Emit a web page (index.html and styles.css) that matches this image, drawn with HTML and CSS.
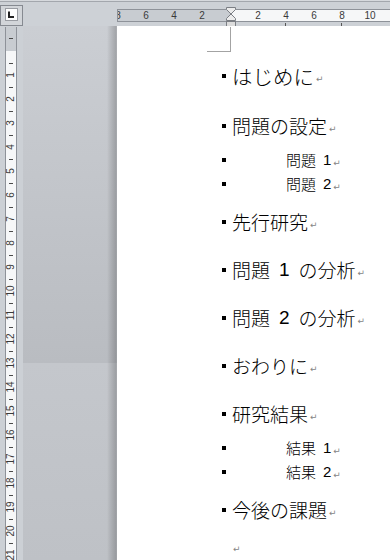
FILE: index.html
```html
<!DOCTYPE html>
<html lang="ja">
<head>
    <meta charset="UTF-8">
    <meta name="viewport" content="width=device-width, initial-scale=1.0">
    <title>文書</title>
    <link rel="stylesheet" href="styles.css">
</head>
<body>
    <div class="topline"></div>
    <div class="app">
        <div class="corner">
            <div class="tab-select">
                <svg width="13" height="13" viewBox="0 0 13 13">
                    <rect x="0.5" y="0.5" width="12" height="12" fill="#fdfdfd" stroke="#9a9da3"/>
                    <path d="M4 3.5 V9 H9" fill="none" stroke="#222" stroke-width="2"/>
                </svg>
            </div>
        </div>

        <div class="hbar">
            <div class="hruler">
                <div class="hr-margin">
                    <span>8</span><span>6</span><span>4</span><span>2</span>
                </div>
                <div class="hr-text">
                    <svg class="indent" width="10" height="21" viewBox="0 0 10 21">
                        <polygon points="0.5,0.5 9.5,0.5 9.5,2.5 5,7 0.5,2.5" fill="#ececec" stroke="#7b7e84"/>
                        <polygon points="5,7 9.5,11.5 9.5,13.5 0.5,13.5 0.5,11.5" fill="#ececec" stroke="#7b7e84"/>
                        <rect x="0.5" y="14.5" width="9" height="6" fill="#dcdcdc" stroke="#7b7e84"/>
                    </svg>
                    <span>2</span><span class="stop">4</span><span>6</span><span class="stop">8</span><span>10</span><span></span>
                </div>
            </div>
        </div>

        <div class="vbar">
            <div class="vruler">
                <div class="vr-margin"><i></i></div>
                <div class="vr-text">
                    <span><em>1</em></span><span><em>2</em></span><span><em>3</em></span>
                    <span><em>4</em></span><span><em>5</em></span><span><em>6</em></span>
                    <span><em>7</em></span><span><em>8</em></span><span><em>9</em></span>
                    <span><em>10</em></span><span><em>11</em></span><span><em>12</em></span>
                    <span><em>13</em></span><span><em>14</em></span><span><em>15</em></span>
                    <span><em>16</em></span><span><em>17</em></span><span><em>18</em></span>
                    <span><em>19</em></span><span><em>20</em></span><span><em>21</em></span>
                </div>
            </div>
        </div>

        <div class="workspace">
            <div class="gutter"></div>
            <div class="page">
                <div class="crop"></div>
                <p class="item title"><b class="bullet"></b>はじめに<span class="pm">↵</span></p>
                <p class="item"><b class="bullet"></b>問題の設定<span class="pm">↵</span></p>
                <p class="sub"><b class="bullet"></b>問題<span class="num">1</span><span class="pm">↵</span></p>
                <p class="sub"><b class="bullet"></b>問題<span class="num">2</span><span class="pm">↵</span></p>
                <p class="item"><b class="bullet"></b>先行研究<span class="pm">↵</span></p>
                <p class="item"><b class="bullet"></b>問題<span class="num">1</span>の分析<span class="pm">↵</span></p>
                <p class="item"><b class="bullet"></b>問題<span class="num">2</span>の分析<span class="pm">↵</span></p>
                <p class="item"><b class="bullet"></b>おわりに<span class="pm">↵</span></p>
                <p class="item"><b class="bullet"></b>研究結果<span class="pm">↵</span></p>
                <p class="sub"><b class="bullet"></b>結果<span class="num">1</span><span class="pm">↵</span></p>
                <p class="sub"><b class="bullet"></b>結果<span class="num">2</span><span class="pm">↵</span></p>
                <p class="item"><b class="bullet"></b>今後の課題<span class="pm">↵</span></p>
                <p class="empty"><span class="pm">↵</span></p>
            </div>
        </div>
    </div>
</body>
</html>
```

FILE: styles.css
```css
html, body {
    margin: 0;
    padding: 0;
    height: 560px;
    overflow: hidden;
}
body {
    font-family: 'Liberation Sans', sans-serif;
    background: #cdd1d6;
}
.topline {
    height: 1px;
    border-bottom: 1px solid #a3a7ad;
    background: #d6d9dd;
}
.app {
    display: grid;
    grid-template-columns: 23px 1fr;
    grid-template-rows: 24px 534px;
}

/* corner tab selector */
.corner {
    padding-top: 3px;
}
.tab-select {
    box-sizing: border-box;
    width: 23px;
    height: 21px;
    border: 1px solid #868a91;
    background: #d2d5d9;
    padding: 2px 0 0 4px;
}
.tab-select svg {
    display: block;
}

/* horizontal ruler */
.hbar {
    padding-top: 7px;
    overflow: hidden;
}
.hruler {
    display: flex;
    height: 13px;
    box-sizing: border-box;
    margin-left: 94px;
    border: 1px solid #8e9299;
    border-right: none;
    font-size: 10px;
    line-height: 11px;
    color: #3a3a3a;
}
.hr-margin {
    width: 112px;
    flex: none;
    display: flex;
    justify-content: flex-end;
    padding-right: 14px;
    box-sizing: border-box;
    overflow: hidden;
    background: #c8ccd1;
}
.hr-text {
    flex: 1;
    display: flex;
    padding-left: 14px;
    position: relative;
    background: #f6f7f8;
}
.hruler span {
    width: 28px;
    flex: none;
    text-align: center;
    position: relative;
}
.hruler .stop::after {
    content: "";
    position: absolute;
    left: 13px;
    top: 13px;
    width: 1px;
    height: 3px;
    background: #555;
}
.indent {
    position: absolute;
    left: -4px;
    top: -3px;
}

/* vertical ruler */
.vbar {
    background: #ccd0d5;
    overflow: hidden;
}
.vruler {
    margin: 1px 0 0 5px;
    width: 12px;
    box-sizing: border-box;
    border-left: 1px solid #8e9299;
    border-right: 1px solid #8e9299;
}
.vr-margin {
    height: 24px;
    background: #c8ccd1;
    padding-top: 11px;
    box-sizing: border-box;
}
.vr-margin i {
    display: block;
    width: 4px;
    height: 1px;
    margin-left: 3px;
    background: #4a4a4a;
}
.vr-text {
    background: #f6f7f8;
    padding-top: 12px;
}
.vr-text span {
    display: flex;
    align-items: center;
    justify-content: center;
    height: 24px;
    position: relative;
}
.vr-text span::before {
    content: "";
    position: absolute;
    top: 0;
    left: 3px;
    width: 4px;
    height: 1px;
    background: #4a4a4a;
}
.vr-text em {
    font-style: normal;
    font-size: 10px;
    line-height: 10px;
    color: #3a3a3a;
    transform: rotate(-90deg);
    white-space: nowrap;
}

/* document area */
.workspace {
    display: flex;
}
.gutter {
    width: 94px;
    flex: none;
    background:
        linear-gradient(to right, rgba(0, 0, 0, 0) 84px, rgba(0, 0, 0, 0.05) 86px, rgba(0, 0, 0, 0.2) 93px, rgba(0, 0, 0, 0.12) 94px),
        linear-gradient(#cbced3 0, #b9bcc1 337px, #c4c7cc 337px, #bec1c6 100%);
}
.page {
    flex: 1;
    position: relative;
    background: #fff;
    padding-top: 24px;
    font-family: 'Noto Sans CJK JP', 'Liberation Sans', sans-serif;
    font-weight: 300;
    color: #000;
}
.crop {
    position: absolute;
    left: 90px;
    top: 1px;
    width: 23px;
    height: 24px;
    border-right: 1px solid #a3a3a3;
    border-bottom: 1px solid #a3a3a3;
}
.item, .sub, .empty {
    margin: 0;
    display: flex;
    align-items: center;
    height: 24px;
    line-height: 24px;
    padding-left: 105px;
    white-space: nowrap;
}
.item {
    padding-top: 14px;
    padding-bottom: 10px;
    font-size: 19px;
}
.item.title {
    font-size: 20.5px;
    padding-bottom: 12px;
}
.sub {
    font-size: 15px;
}
.empty {
    padding-top: 2px;
    padding-left: 114px;
}
.bullet {
    width: 4px;
    height: 4px;
    background: #000;
    flex: none;
    margin-right: 6px;
}
.sub .bullet {
    margin-right: 60px;
}
.num {
    font-family: 'Liberation Sans', sans-serif;
    font-weight: normal;
    margin: 0 9px;
}
.sub .num {
    margin-right: 0;
    margin-left: 7px;
}
.pm {
    font-family: 'DejaVu Sans', sans-serif;
    font-weight: normal;
    font-size: 9px;
    line-height: 9px;
    color: #858585;
    margin: 6px 0 0 2px;
}
```
